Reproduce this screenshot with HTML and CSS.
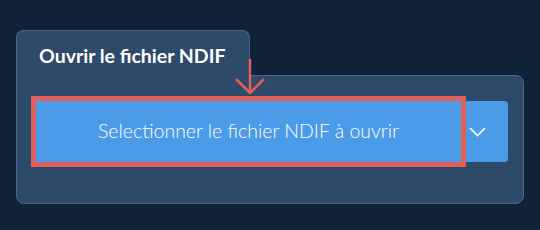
FILE: index.html
```html
<!DOCTYPE html>
<html lang="fr">
<head>
    <meta charset="UTF-8">
    <title>Ouvrir le fichier NDIF</title>
    <link rel="stylesheet" href="styles.css">
</head>
<body>
    <div class="open-box">
        <div class="tab">Ouvrir le fichier NDIF</div>
        <div class="panel">
            <div class="split-btn">
                <button class="main-btn">Selectionner le fichier NDIF à ouvrir</button>
                <button class="drop-btn">
                    <svg width="17" height="10" viewBox="0 0 17 10">
                        <polyline points="1,1 8.5,8.5 16,1" fill="none" stroke="white" stroke-width="1.6"/>
                    </svg>
                </button>
            </div>
            <!-- annotation: arrow pointing at the button -->
            <svg class="hint-arrow" width="30" height="36" viewBox="0 0 30 36">
                <line x1="15" y1="0" x2="15" y2="34" stroke="#e0605a" stroke-width="2.5"/>
                <polyline points="1,20 15,34 29,20" fill="none" stroke="#e0605a" stroke-width="2.5"/>
            </svg>
        </div>
    </div>
</body>
</html>
```

FILE: styles.css
```css
body {
    background-color: #102238; /* Dark navy */
    margin: 0;
    padding: 30px 16px;
    font-family: Lato, "Open Sans", sans-serif;
}
.open-box {
    display: flex;
    flex-direction: column;
}
.tab {
    align-self: flex-start;
    width: 234px;
    height: 46px;
    box-sizing: border-box;
    padding: 13px 0 0 22px;
    background-color: #2d4a6a;
    border: 1px solid #4b6789;
    border-bottom: none;
    border-radius: 8px 8px 0 0;
    color: white;
    font-size: 19.5px;
    font-weight: bold;
    margin-bottom: -1px;
    position: relative;
    z-index: 1;
}
.panel {
    position: relative;
    background-color: #2d4a6a;
    border: 1px solid #4b6789;
    border-radius: 0 8px 8px 8px;
    padding: 25px 15px 41px 19px;
}
.split-btn {
    display: flex;
    height: 61px;
}
.main-btn {
    flex: 1;
    background-color: #4c9be8;
    color: white;
    border: none;
    border-radius: 0;
    font-family: Lato, sans-serif;
    font-size: 19.5px;
    font-weight: 300;
    padding: 0 0 2px;
    box-shadow: 0 0 0 5px #df5f5a; /* Red highlight */
    position: relative;
    z-index: 1;
}
.drop-btn {
    width: 47px;
    background-color: #4c9be8;
    border: none;
    border-radius: 0 4px 4px 0;
    display: flex;
    align-items: center;
    justify-content: center;
    padding: 0 15px 0 0;
}
.hint-arrow {
    position: absolute;
    left: 218px;
    top: -17px;
    z-index: 2;
}
```
